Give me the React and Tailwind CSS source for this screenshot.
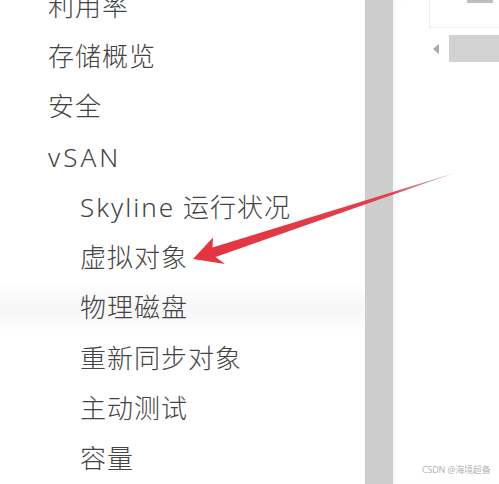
import React from "react";

const font = { fontFamily: '"Noto Sans", "Noto Sans CJK SC", sans-serif' };

function Row({ children, sub, hl }) {
  return (
    <div
      className={`h-[51px] flex items-center text-[26px] font-light tracking-[1px] text-[#444444] whitespace-nowrap ${
        sub ? "pl-[80px]" : "pl-[48px]"
      } ${hl ? "bg-gradient-to-b from-white via-[#f6f6f6] to-white" : ""}`}
    >
      {children}
    </div>
  );
}

export default function App() {
  return (
    <div className="relative w-[499px] h-[484px] overflow-hidden bg-white" style={font}>
      <div className="flex h-full">
        <div className="w-[365px] flex flex-col -mt-[19px]">
          <Row>利用率</Row>
          <Row>存储概览</Row>
          <Row>安全</Row>
          <Row>
            <span className="tracking-[3px]">vSAN</span>
          </Row>
          <Row sub>
            <span className="tracking-[2px]">Skyline</span>&nbsp;运行状况
          </Row>
          <Row sub>虚拟对象</Row>
          <Row sub hl>物理磁盘</Row>
          <Row sub>重新同步对象</Row>
          <Row sub>主动测试</Row>
          <Row sub>容量</Row>
        </div>
        <div className="w-[28px] h-full bg-[#cdcdcd]" />
        <div className="flex-1 h-full shadow-[inset_6px_0_8px_-6px_rgba(0,0,0,0.08)]">
          <div className="ml-[36px] h-[28px] border-b border-l border-[#ececec] flex justify-end pr-[6px]">
            <div className="w-[26px] h-[3px] bg-[#bdbdbd]" />
          </div>
          <div className="ml-[40px] mt-[7px] flex items-center gap-[10px] h-[27px]">
            <div className="w-0 h-0 border-y-[5px] border-y-transparent border-r-[6px] border-r-[#a9a9a9]" />
            <div className="flex-1 h-[27px] bg-[#d2d2d2]" />
          </div>
        </div>
      </div>

      <svg className="absolute inset-0" width="499" height="484" viewBox="0 0 499 484">
        <defs>
          <linearGradient id="g" x1="193" y1="259" x2="456" y2="172" gradientUnits="userSpaceOnUse">
            <stop offset="0" stopColor="#e4343f" />
            <stop offset="0.75" stopColor="#e2404d" />
            <stop offset="1" stopColor="#9a8a90" stopOpacity="0.5" />
          </linearGradient>
        </defs>
        <polygon
          points="193,259 213,237.5 212.5,247.4 456,172.5 215.5,257 225,264"
          fill="url(#g)"
        />
      </svg>

      <div
        className="absolute left-[422px] top-[463px] text-[9px] tracking-[-0.2px] text-[#b5b5b5] whitespace-nowrap"
        style={font}
      >
        CSDN @海境超备
      </div>
    </div>
  );
}
